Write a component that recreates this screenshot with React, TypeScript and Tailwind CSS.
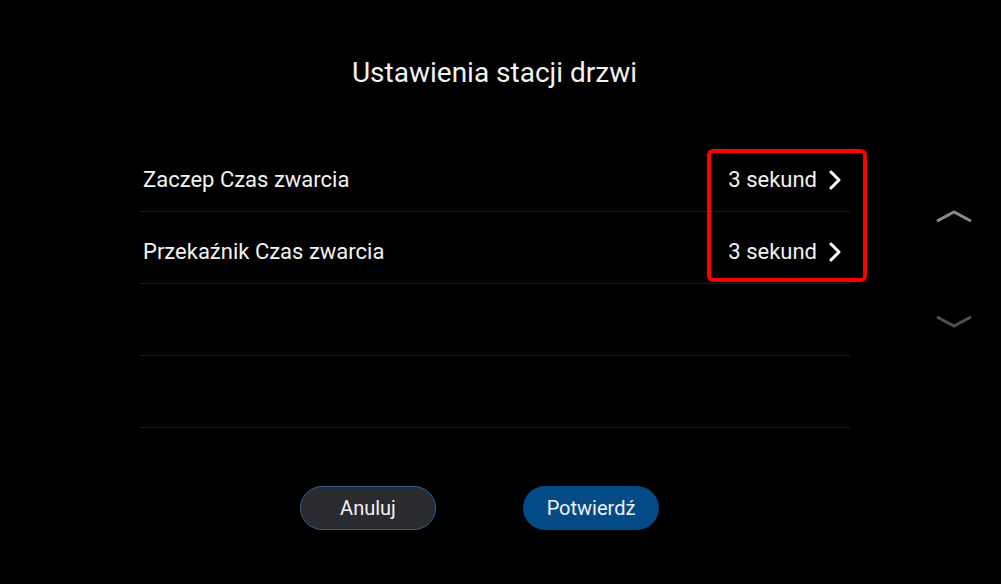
import React from "react"

const rows = [
  { label: "Zaczep Czas zwarcia", value: "3 sekund" },
  { label: "Przekaźnik Czas zwarcia", value: "3 sekund" },
  { label: "", value: "" },
  { label: "", value: "" },
]

const Chevron = () => (
  <svg width="14" height="20" viewBox="0 0 14 20" fill="none">
    <path d="M3 2 L11 10 L3 18" stroke="#ffffff" strokeWidth="3" strokeLinecap="round" strokeLinejoin="round" />
  </svg>
)

const App = () => {
  return (
    <div
      className="relative w-[1001px] h-[584px] bg-black text-[#f2f2f2] overflow-hidden"
      style={{ fontFamily: "Roboto, 'Noto Sans', sans-serif" }}
    >
      <div className="h-[140px] pt-[53px] pr-[12px] flex justify-center">
        <h1 className="text-[28px] leading-[40px] font-normal">Ustawienia stacji drzwi</h1>
      </div>

      <div className="flex">
        <div className="ml-[140px] w-[710px]">
          {rows.map((row, i) => (
            <div
              key={i}
              className="h-[72px] pt-[8px] flex items-center justify-between border-b border-[#1c1c1c] pl-[3px] pr-[8px]"
            >
              <span className="text-[22px]">{row.label}</span>
              {row.value && (
                <span className="flex items-center gap-[11px]">
                  <span className="text-[22px]">{row.value}</span>
                  <Chevron />
                </span>
              )}
            </div>
          ))}
        </div>

        <div className="ml-[86px] w-[36px] pt-[70px] flex flex-col gap-[94px]">
          <svg width="36" height="12" viewBox="0 0 36 12" fill="none">
            <path d="M1 11 L18 2 L35 11" stroke="#8a8a8a" strokeWidth="3" />
          </svg>
          <svg width="36" height="12" viewBox="0 0 36 12" fill="none">
            <path d="M1 1 L18 10 L35 1" stroke="#505050" strokeWidth="3" />
          </svg>
        </div>
      </div>

      <div className="mt-[58px] pl-[300px] flex gap-[87px]">
        <button className="w-[136px] h-[44px] rounded-full bg-[#2a2b31] border border-[#2c5f91] text-[20px] text-[#f2f2f2]">
          Anuluj
        </button>
        <button className="w-[136px] h-[44px] rounded-full bg-[#044a86] text-[20px] text-[#f2f2f2]">
          Potwierdź
        </button>
      </div>

      <div className="absolute left-[707px] top-[149px] w-[160px] h-[133px] border-4 border-[#ff0000] rounded-[6px]" />
    </div>
  )
}

export default App
